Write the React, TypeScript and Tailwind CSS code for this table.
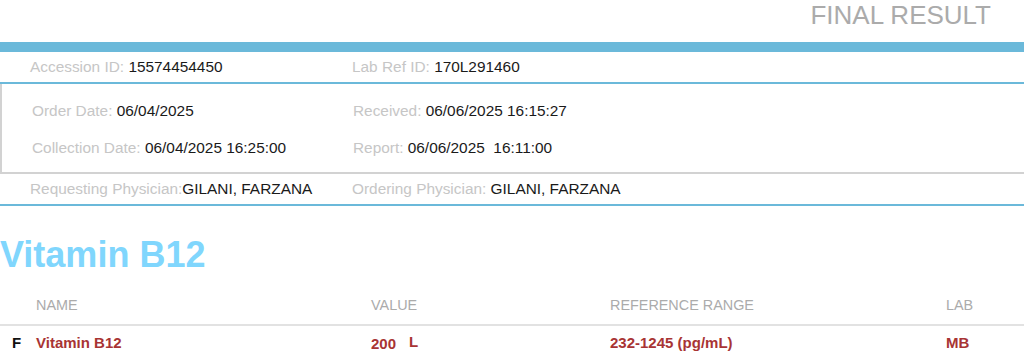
import React from 'react';

const Field = ({ label, value }: { label: string; value: string }) => (
  <div className="whitespace-pre">
    <span className="text-[#c6c6c6]">{label}</span>
    <span className="text-[#1a1a1a]">{value}</span>
  </div>
);

export default function App() {
  return (
    <div className="w-[1024px] h-[357px] overflow-hidden bg-white font-['Liberation_Sans',Arial,sans-serif]">
      <div className="flex h-[42px] items-start justify-end pr-[33px]">
        <span className="text-[26px] leading-[30px] text-[#ababab]">FINAL RESULT</span>
      </div>
      <div className="h-[10px] bg-[#6bb9da]"></div>

      <div className="grid h-[32px] grid-cols-[322px_1fr] items-center border-b-2 border-[#6bb9da] pl-[30px] text-[15.4px]">
        <Field label="Accession ID: " value="15574454450" />
        <Field label="Lab Ref ID: " value="170L291460" />
      </div>

      <div className="border-b-2 border-l-2 border-[#d2d2d2] pb-[6px] pl-[30px] pt-[8px] text-[15.4px]">
        <div className="grid h-[37px] grid-cols-[321px_1fr] items-center">
          <Field label="Order Date: " value="06/04/2025" />
          <Field label="Received: " value="06/06/2025 16:15:27" />
        </div>
        <div className="grid h-[37px] grid-cols-[321px_1fr] items-center">
          <Field label="Collection Date: " value="06/04/2025 16:25:00" />
          <Field label="Report: " value="06/06/2025  16:11:00" />
        </div>
      </div>

      <div className="grid h-[32px] grid-cols-[322px_1fr] items-center border-b-2 border-[#6bb9da] pl-[30px] text-[15.4px]">
        <Field label="Requesting Physician:" value="GILANI, FARZANA" />
        <Field label="Ordering Physician: " value="GILANI, FARZANA" />
      </div>

      <h1 className="mt-[29px] text-[36px] font-bold leading-[40px] text-[#80d6fd]">Vitamin B12</h1>

      <div className="mt-[16px] grid h-[35px] grid-cols-[36px_335px_239px_336px_1fr] items-center border-b-2 border-[#e2e2e2] pb-[4px] text-[14.4px] text-[#ababab]">
        <span></span>
        <span>NAME</span>
        <span>VALUE</span>
        <span>REFERENCE RANGE</span>
        <span>LAB</span>
      </div>

      <div className="grid h-[34px] grid-cols-[36px_335px_239px_336px_1fr] items-center text-[15px] font-bold text-[#a83434]">
        <span className="pl-[12px] text-[#111]">F</span>
        <span>Vitamin B12</span>
        <span>
          200<span className="ml-[13px] align-[2px]">L</span>
        </span>
        <span>232-1245 (pg/mL)</span>
        <span>MB</span>
      </div>
    </div>
  );
}
